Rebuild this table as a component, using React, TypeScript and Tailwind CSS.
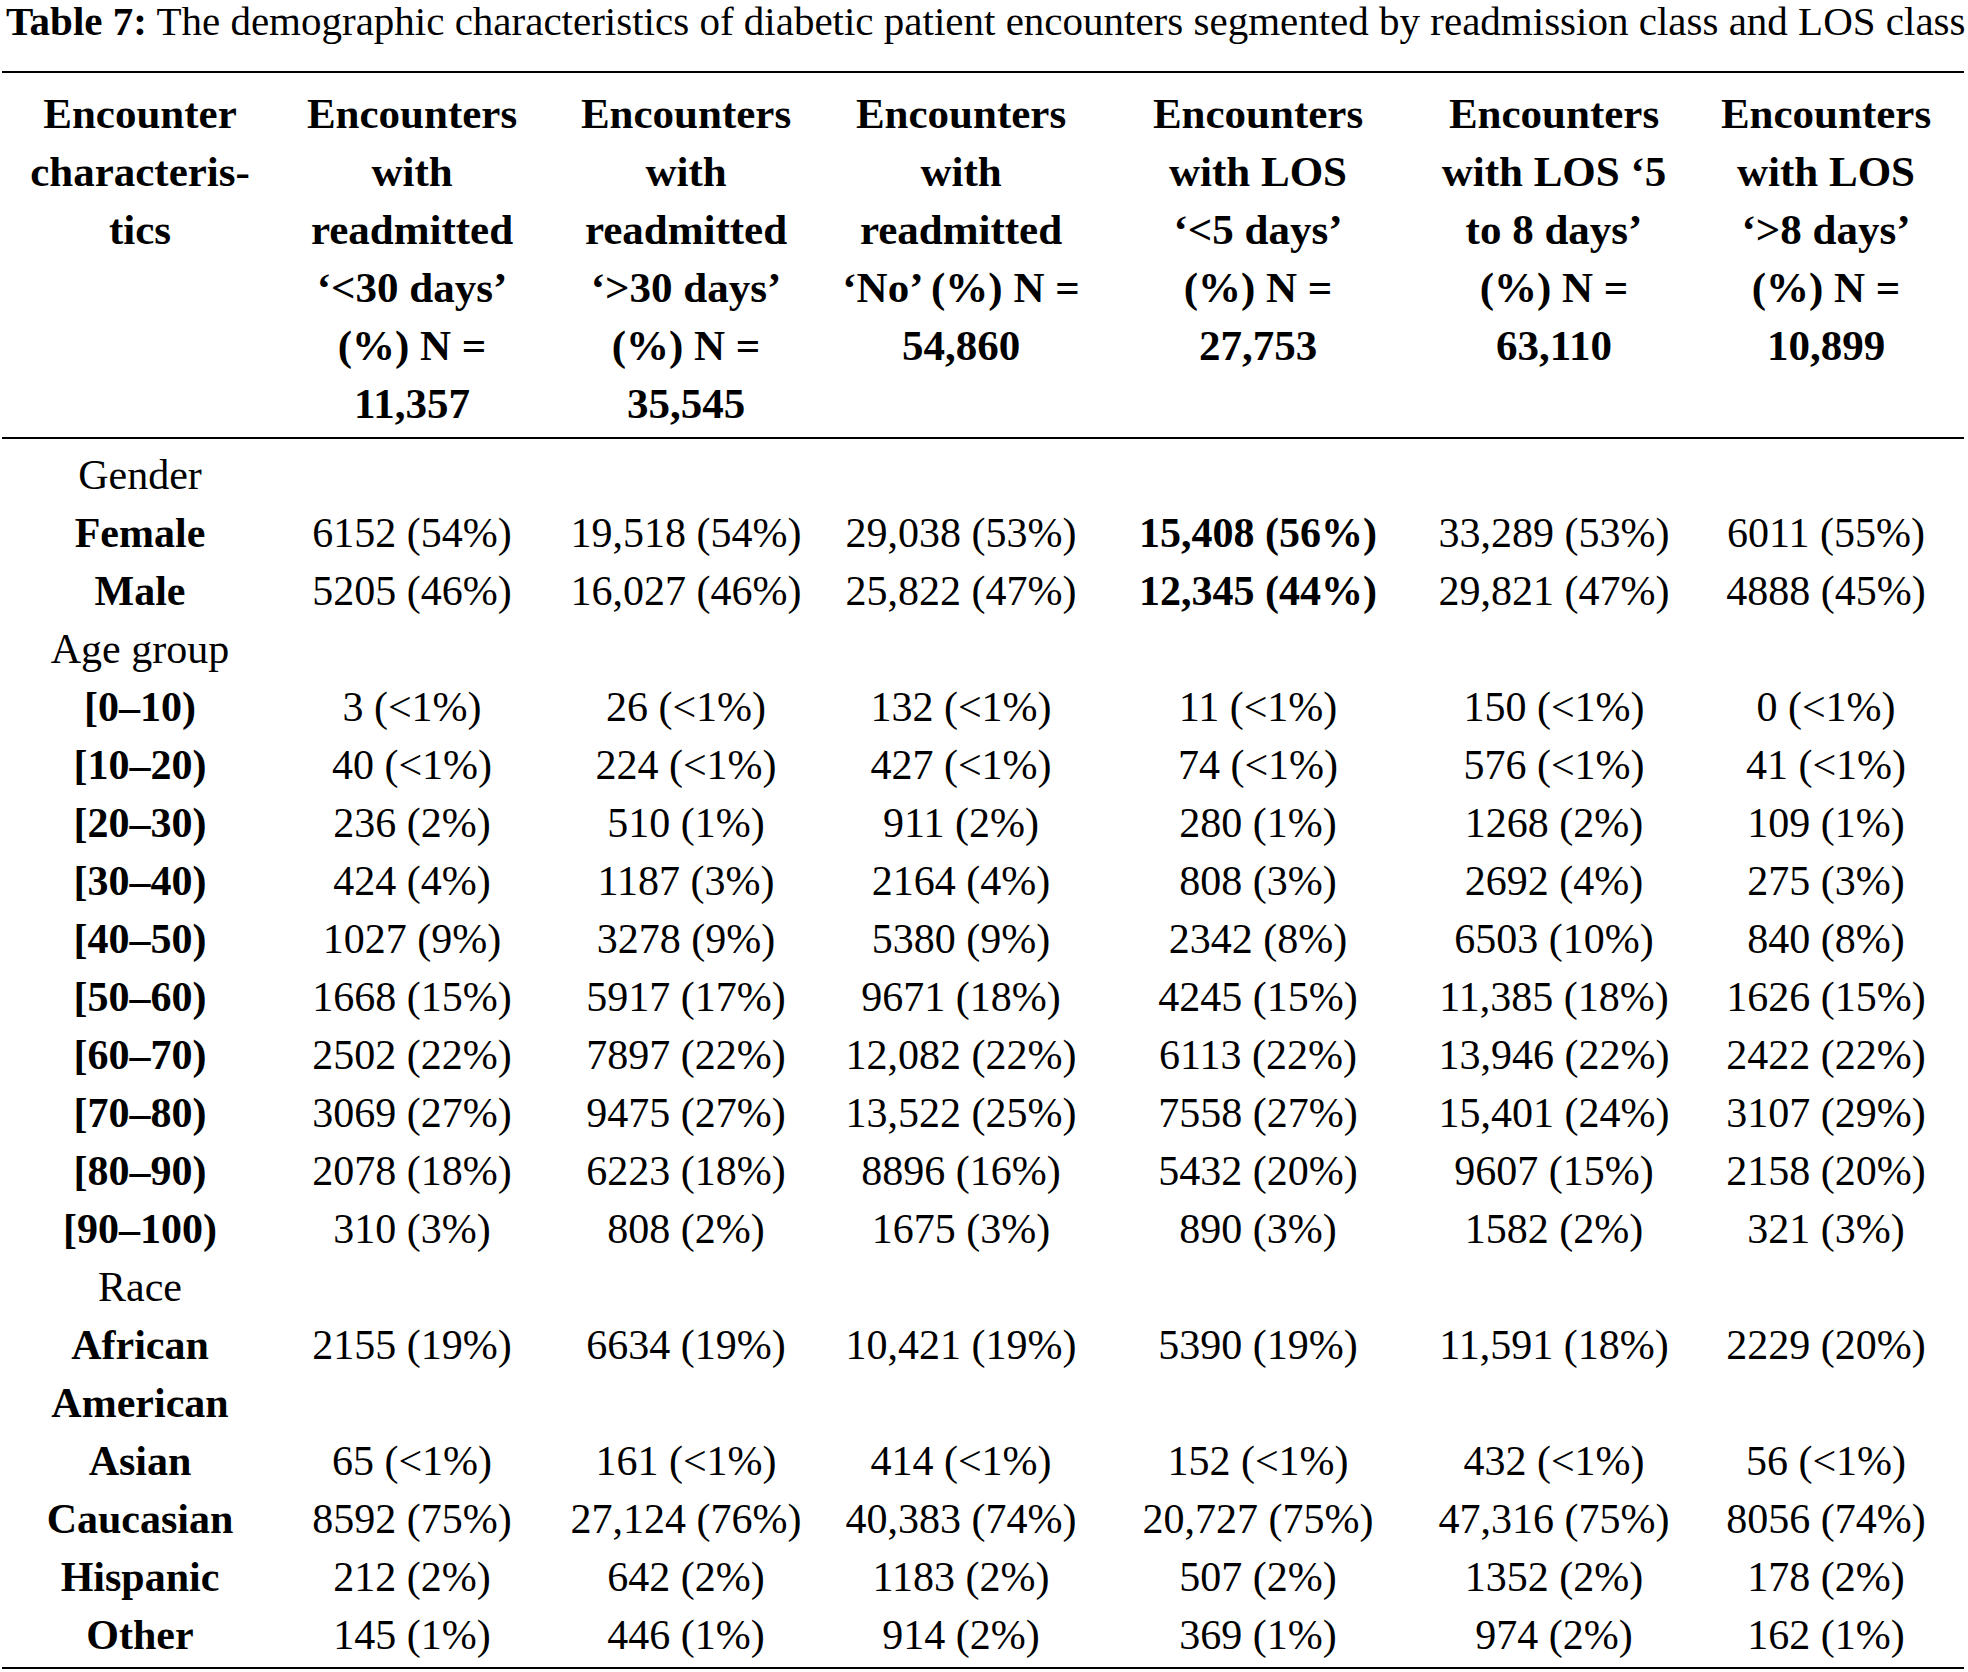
import React from 'react';

type Cell = { text: string; bold?: boolean };

const cols = 'grid grid-cols-[276px_268px_280px_270px_324px_268px_276px]';

const header: string[][] = [
  ['Encounter', 'characteris-', 'tics'],
  ['Encounters', 'with', 'readmitted', '‘<30 days’', '(%) N =', '11,357'],
  ['Encounters', 'with', 'readmitted', '‘>30 days’', '(%) N =', '35,545'],
  ['Encounters', 'with', 'readmitted', '‘No’ (%) N =', '54,860'],
  ['Encounters', 'with LOS', '‘<5 days’', '(%) N =', '27,753'],
  ['Encounters', 'with LOS ‘5', 'to 8 days’', '(%) N =', '63,110'],
  ['Encounters', 'with LOS', '‘>8 days’', '(%) N =', '10,899'],
];

type Row =
  | { kind: 'group'; label: string }
  | { kind: 'data'; label: string[]; values: (string | Cell)[] };

const rows: Row[] = [
  { kind: 'group', label: 'Gender' },
  {
    kind: 'data',
    label: ['Female'],
    values: ['6152 (54%)', '19,518 (54%)', '29,038 (53%)', { text: '15,408 (56%)', bold: true }, '33,289 (53%)', '6011 (55%)'],
  },
  {
    kind: 'data',
    label: ['Male'],
    values: ['5205 (46%)', '16,027 (46%)', '25,822 (47%)', { text: '12,345 (44%)', bold: true }, '29,821 (47%)', '4888 (45%)'],
  },
  { kind: 'group', label: 'Age group' },
  { kind: 'data', label: ['[0–10)'], values: ['3 (<1%)', '26 (<1%)', '132 (<1%)', '11 (<1%)', '150 (<1%)', '0 (<1%)'] },
  { kind: 'data', label: ['[10–20)'], values: ['40 (<1%)', '224 (<1%)', '427 (<1%)', '74 (<1%)', '576 (<1%)', '41 (<1%)'] },
  { kind: 'data', label: ['[20–30)'], values: ['236 (2%)', '510 (1%)', '911 (2%)', '280 (1%)', '1268 (2%)', '109 (1%)'] },
  { kind: 'data', label: ['[30–40)'], values: ['424 (4%)', '1187 (3%)', '2164 (4%)', '808 (3%)', '2692 (4%)', '275 (3%)'] },
  { kind: 'data', label: ['[40–50)'], values: ['1027 (9%)', '3278 (9%)', '5380 (9%)', '2342 (8%)', '6503 (10%)', '840 (8%)'] },
  { kind: 'data', label: ['[50–60)'], values: ['1668 (15%)', '5917 (17%)', '9671 (18%)', '4245 (15%)', '11,385 (18%)', '1626 (15%)'] },
  { kind: 'data', label: ['[60–70)'], values: ['2502 (22%)', '7897 (22%)', '12,082 (22%)', '6113 (22%)', '13,946 (22%)', '2422 (22%)'] },
  { kind: 'data', label: ['[70–80)'], values: ['3069 (27%)', '9475 (27%)', '13,522 (25%)', '7558 (27%)', '15,401 (24%)', '3107 (29%)'] },
  { kind: 'data', label: ['[80–90)'], values: ['2078 (18%)', '6223 (18%)', '8896 (16%)', '5432 (20%)', '9607 (15%)', '2158 (20%)'] },
  { kind: 'data', label: ['[90–100)'], values: ['310 (3%)', '808 (2%)', '1675 (3%)', '890 (3%)', '1582 (2%)', '321 (3%)'] },
  { kind: 'group', label: 'Race' },
  {
    kind: 'data',
    label: ['African', 'American'],
    values: ['2155 (19%)', '6634 (19%)', '10,421 (19%)', '5390 (19%)', '11,591 (18%)', '2229 (20%)'],
  },
  { kind: 'data', label: ['Asian'], values: ['65 (<1%)', '161 (<1%)', '414 (<1%)', '152 (<1%)', '432 (<1%)', '56 (<1%)'] },
  { kind: 'data', label: ['Caucasian'], values: ['8592 (75%)', '27,124 (76%)', '40,383 (74%)', '20,727 (75%)', '47,316 (75%)', '8056 (74%)'] },
  { kind: 'data', label: ['Hispanic'], values: ['212 (2%)', '642 (2%)', '1183 (2%)', '507 (2%)', '1352 (2%)', '178 (2%)'] },
  { kind: 'data', label: ['Other'], values: ['145 (1%)', '446 (1%)', '914 (2%)', '369 (1%)', '974 (2%)', '162 (1%)'] },
];

const App = () => {
  return (
    <div className="w-[1968px] h-[1672px] bg-white text-black font-['Liberation_Serif',serif] text-[42px] leading-[58px]">
      <div className="h-[44px] px-[6px] text-[41px] leading-[42px] whitespace-nowrap">
        <span className="font-bold">Table 7:</span> The demographic characteristics of diabetic patient encounters segmented by readmission class and LOS class
      </div>

      <div className="ml-[2px] w-[1962px] mt-[27px] border-t-2 border-b-2 border-black">
        <div className={`${cols} pt-[12px] pb-[4px] border-b-2 border-black font-bold text-[43px]`}>
          {header.map((lines, i) => (
            <div key={i} className="flex flex-col items-center whitespace-nowrap">
              {lines.map((l, j) => (
                <span key={j}>{l}</span>
              ))}
            </div>
          ))}
        </div>

        <div className="pt-[7px] pb-[3px]">
          {rows.map((row, i) =>
            row.kind === 'group' ? (
              <div key={i} className={cols}>
                <div className="text-center whitespace-nowrap">{row.label}</div>
              </div>
            ) : (
              <div key={i} className={cols}>
                <div className="flex flex-col items-center font-bold whitespace-nowrap">
                  {row.label.map((l, j) => (
                    <span key={j}>{l}</span>
                  ))}
                </div>
                {row.values.map((v, j) => {
                  const cell = typeof v === 'string' ? { text: v } : v;
                  return (
                    <div key={j} className={`text-center whitespace-nowrap ${cell.bold ? 'font-bold' : ''}`}>
                      {cell.text}
                    </div>
                  );
                })}
              </div>
            ),
          )}
        </div>
      </div>
    </div>
  );
};

export default App;
